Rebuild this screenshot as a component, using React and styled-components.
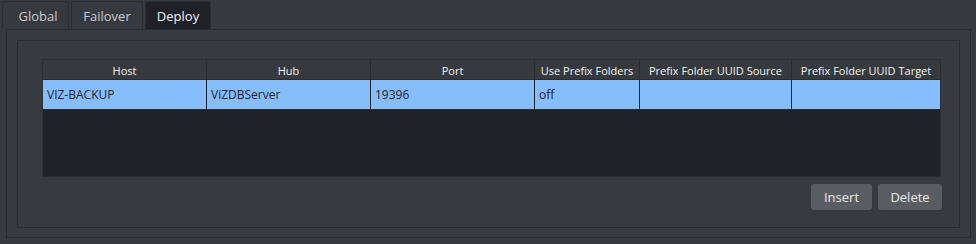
import styled, { createGlobalStyle } from 'styled-components';

const GlobalStyle = createGlobalStyle`
  html, body {
    margin: 0;
    padding: 0;
    background: #36393e;
    font-family: "Open Sans", "Noto Sans", sans-serif;
    font-size: 12px;
  }
`;

const Page = styled.div`
  width: 976px;
  height: 244px;
  box-sizing: border-box;
  padding: 1px 5px 6px 6px;
  display: flex;
  flex-direction: column;
`;

const TabBar = styled.div`
  display: flex;
  gap: 2px;
  margin-left: -4px;
  height: 30px;
`;

const Tab = styled.div`
  width: ${p => p.$w}px;
  box-sizing: border-box;
  padding: 1px 0 0 ${p => p.$pl || 0}px;
  display: flex;
  align-items: center;
  justify-content: center;
  font-size: 13px;
  color: ${p => (p.$active ? '#f2f4f7' : '#c9ccd0')};
  background: ${p => (p.$active ? '#1f2126' : '#36393e')};
  border: 1px solid #2c2e32;
  border-bottom: none;
  border-radius: 3px 3px 0 0;
`;

const Pane = styled.div`
  flex: 1;
  border: 1px solid #2a2c30;
  background: #373a3f;
  padding: 10px 10px 9px 10px;
  display: flex;
`;

const GroupBox = styled.div`
  flex: 1;
  border: 1px solid #2a2c30;
  padding: 18px 18px 17px 24px;
  display: flex;
  flex-direction: column;
`;

const Table = styled.div`
  height: 116px;
  background: #1f2226;
  border: 1px solid #2c2f33;
  display: flex;
  flex-direction: column;
`;

const Row = styled.div`
  display: grid;
  grid-template-columns: 164px 164px 164px 105px 152px 1fr;
  height: ${p => p.$h}px;
  background: ${p => (p.$selected ? '#86bdfd' : '#36393e')};
  border-bottom: 1px solid #2a2c30;
`;

const Cell = styled.div`
  display: flex;
  align-items: center;
  justify-content: ${p => (p.$head ? 'center' : 'flex-start')};
  padding: ${p => (p.$head ? '1px 0 0 0' : '0 0 0 4px')};
  font-size: ${p => (p.$head ? 11 : 12)}px;
  color: ${p => (p.$head ? '#f2f4f7' : '#1f2226')};
  border-right: 1px solid ${p => (p.$head ? '#2a2c30' : '#1f2226')};
  white-space: nowrap;
  overflow: hidden;
  &:last-child {
    border-right: none;
  }
`;

const Actions = styled.div`
  display: flex;
  justify-content: flex-end;
  gap: 6px;
  margin-top: 7px;
  margin-right: -1px;
`;

const Button = styled.button`
  width: ${p => p.$w}px;
  height: 26px;
  font-family: inherit;
  font-size: 13px;
  color: #e8eaed;
  background: #595d62;
  border: none;
  border-radius: 3px;
`;

const columns = ['Host', 'Hub', 'Port', 'Use Prefix Folders', 'Prefix Folder UUID Source', 'Prefix Folder UUID Target'];
const rows = [['VIZ-BACKUP', 'ViZDBServer', '19396', 'off', '', '']];

export default function App() {
  return (
    <Page>
      <GlobalStyle />
      <TabBar>
        <Tab $w={67} $pl={5}>Global</Tab>
        <Tab $w={72}>Failover</Tab>
        <Tab $w={66} $active>Deploy</Tab>
      </TabBar>
      <Pane>
        <GroupBox>
          <Table>
            <Row $h={19}>
              {columns.map(c => (
                <Cell key={c} $head>{c}</Cell>
              ))}
            </Row>
            {rows.map((r, i) => (
              <Row key={i} $h={29} $selected>
                {r.map((v, j) => (
                  <Cell key={j}>{v}</Cell>
                ))}
              </Row>
            ))}
          </Table>
          <Actions>
            <Button $w={61}>Insert</Button>
            <Button $w={64}>Delete</Button>
          </Actions>
        </GroupBox>
      </Pane>
    </Page>
  );
}
